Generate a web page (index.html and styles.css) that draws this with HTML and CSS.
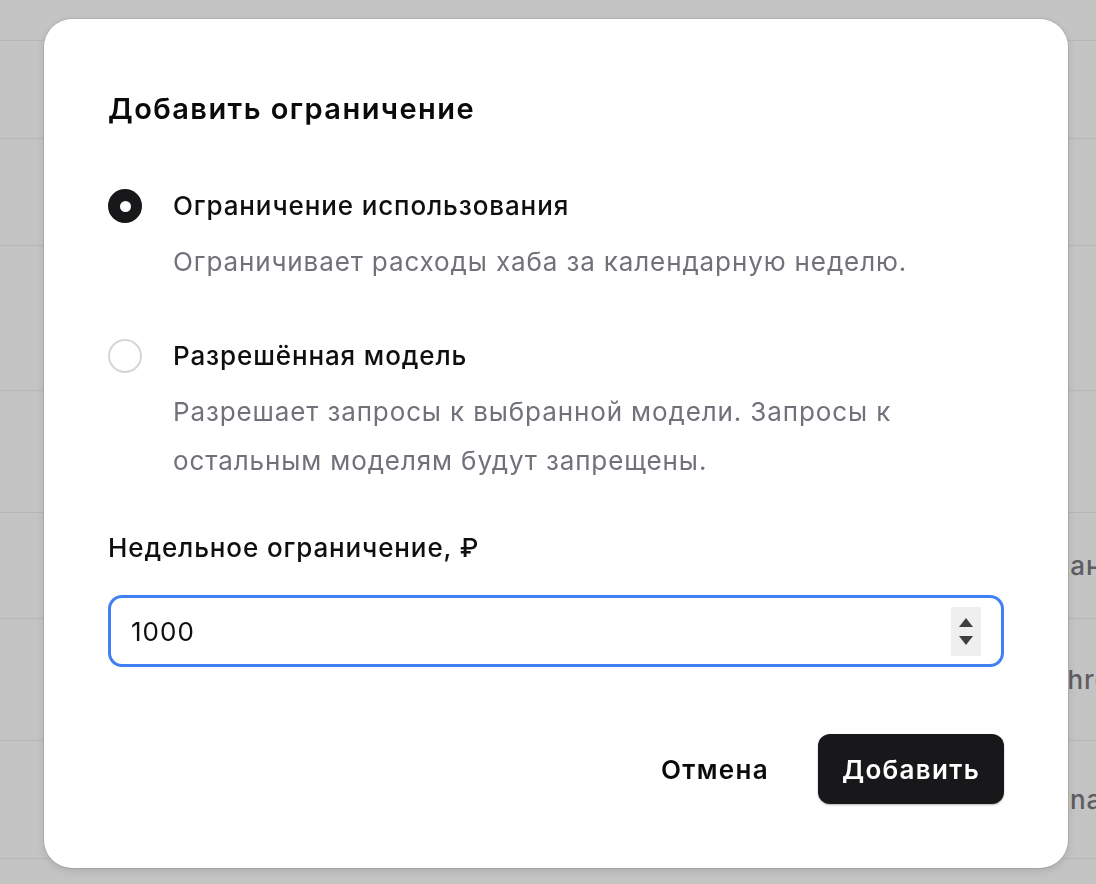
FILE: index.html
```html
<!DOCTYPE html>
<html lang="ru">
<head>
  <meta charset="UTF-8" />
  <meta name="viewport" content="width=device-width, initial-scale=1.0" />
  <title>Добавить ограничение</title>
  <link rel="stylesheet" href="styles.css">
</head>
<body>
  <div class="page">
    <div class="row row-head"></div>
    <div class="row row-1"></div>
    <div class="row row-2"></div>
    <div class="row row-3"></div>
    <div class="row row-4"></div>
    <div class="row row-5"><span class="cell cell-a">План</span></div>
    <div class="row row-6"><span class="cell cell-b">Anthropic</span></div>
    <div class="row row-7"><span class="cell cell-c">Luna</span></div>
  </div>

  <div class="overlay">
    <div class="modal">
      <h2 class="modal-title">Добавить ограничение</h2>

      <div class="option">
        <div class="option-head">
          <span class="radio checked"></span>
          <span class="option-label">Ограничение использования</span>
        </div>
        <p class="option-desc">Ограничивает расходы хаба за календарную неделю.</p>
      </div>

      <div class="option">
        <div class="option-head">
          <span class="radio"></span>
          <span class="option-label">Разрешённая модель</span>
        </div>
        <p class="option-desc">Разрешает запросы к выбранной модели. Запросы к остальным моделям будут запрещены.</p>
      </div>

      <label class="field-label" for="limit">Недельное ограничение, ₽</label>
      <div class="field">
        <input class="field-input" id="limit" type="text" value="1000" />
        <div class="spinner">
          <span class="arrow up"></span>
          <span class="arrow down"></span>
        </div>
      </div>

      <div class="actions">
        <button class="btn btn-ghost">Отмена</button>
        <button class="btn btn-primary">Добавить</button>
      </div>
    </div>
  </div>
</body>
</html>
```

FILE: styles.css
```css
body {
  margin: 0;
  padding: 0;
  background: #c4c4c4;
  font-family: Inter, 'Noto Sans', sans-serif;
  letter-spacing: 0.055em;
  overflow: hidden;
  height: 884px;
}
.page {
  display: flex;
  flex-direction: column;
}
.row {
  border-bottom: 1px solid #b7b7b7;
  display: flex;
  align-items: center;
  box-sizing: border-box;
  color: #5d5d63;
  font-size: 26px;
  font-weight: 500;
  white-space: nowrap;
  overflow: hidden;
}
.row-head { height: 41px; }
.row-1 { height: 98px; }
.row-2 { height: 107px; }
.row-3 { height: 145px; }
.row-4 { height: 122px; }
.row-5 { height: 106px; }
.row-6 { height: 122px; }
.row-7 { height: 118px; }
.cell-a { margin-left: 1034px; }
.cell-b { margin-left: 1022px; }
.cell-c { margin-left: 1038px; }

.overlay {
  position: fixed;
  top: 0;
  left: 0;
  right: 0;
  bottom: 0;
  display: flex;
  align-items: flex-start;
  padding: 19px 28px 0 44px;
}
.modal {
  width: 1024px;
  box-sizing: border-box;
  background: #fff;
  border-radius: 28px;
  padding: 72px 64px 64px;
  box-shadow: 0 0 0 1px rgba(0, 0, 0, 0.08), 0 3px 8px rgba(0, 0, 0, 0.12);
  display: flex;
  flex-direction: column;
}
.modal-title {
  margin: 0;
  font-size: 29px;
  line-height: 36px;
  font-weight: 600;
  letter-spacing: 0.05em;
  color: #0a0a0a;
}
.option {
  margin-top: 61px;
}
.option + .option {
  margin-top: 52px;
}
.option-head {
  display: flex;
  align-items: center;
  gap: 31px;
}
.radio {
  width: 34px;
  height: 34px;
  border-radius: 50%;
  box-sizing: border-box;
  border: 2px solid #d6d6d9;
  background: #fff;
  flex: none;
  display: flex;
  align-items: center;
  justify-content: center;
}
.radio.checked {
  background: #18181b;
  border-color: #18181b;
}
.radio.checked::after {
  content: '';
  width: 11px;
  height: 11px;
  border-radius: 50%;
  background: #fff;
}
.option-label {
  font-size: 26px;
  line-height: 36px;
  font-weight: 500;
  color: #0f0f10;
}
.option-desc {
  margin: 13px 0 0 65px;
  font-size: 26px;
  line-height: 49px;
  color: #71717a;
  max-width: 800px;
}
.field-label {
  margin-top: 45px;
  font-size: 26px;
  line-height: 36px;
  font-weight: 500;
  color: #0f0f10;
}
.field {
  margin-top: 29px;
  height: 72px;
  box-sizing: border-box;
  border: 3px solid #4180f2;
  border-radius: 14px;
  display: flex;
  align-items: center;
  padding: 0 20px 0 20px;
}
.field-input {
  flex: 1;
  border: none;
  outline: none;
  font-family: inherit;
  letter-spacing: 0.04em;
  font-size: 26px;
  color: #0f0f10;
  padding: 0;
  background: transparent;
}
.spinner {
  width: 30px;
  height: 49px;
  background: #efefef;
  display: flex;
  flex-direction: column;
  align-items: center;
  justify-content: center;
  gap: 9px;
}
.arrow {
  width: 0;
  height: 0;
  border-left: 7px solid transparent;
  border-right: 7px solid transparent;
}
.arrow.up { border-bottom: 9px solid #3f3f3f; }
.arrow.down { border-top: 9px solid #3f3f3f; }

.actions {
  margin-top: 67px;
  display: flex;
  justify-content: flex-end;
  gap: 25px;
}
.btn {
  height: 70px;
  padding: 0 24px;
  border-radius: 12px;
  border: none;
  font-family: inherit;
  letter-spacing: 0.05em;
  font-size: 26px;
  font-weight: 600;
  cursor: pointer;
}
.btn-ghost {
  background: transparent;
  color: #0a0a0a;
}
.btn-primary {
  background: #18181b;
  color: #fff;
  box-shadow: 0 1px 2px rgba(0, 0, 0, 0.3);
}
```
